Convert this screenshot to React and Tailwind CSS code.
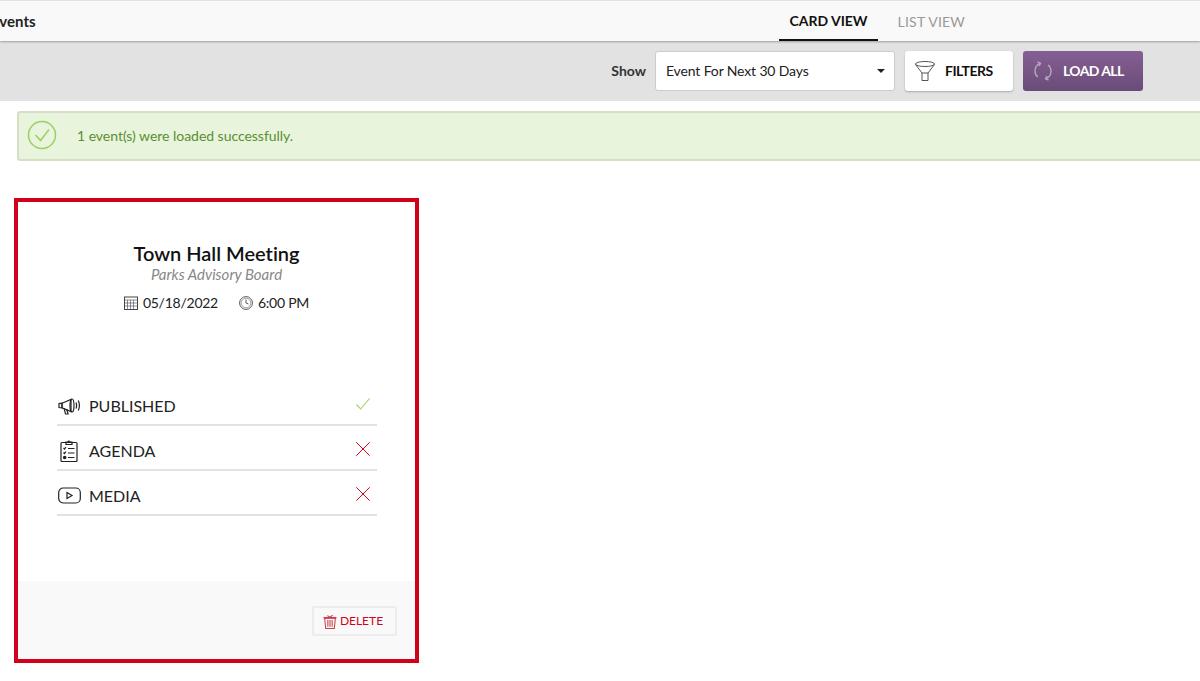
const font = "font-['Lato','Liberation_Sans',sans-serif]";

function Megaphone() {
  return (
    <svg width="23" height="18" viewBox="0 0 23 18" fill="none" stroke="#222" strokeWidth="1.2">
      <path d="M1 6.5v4l3 .3V6.2z" />
      <path d="M4 6.2 13 2.5v12L4 10.8z" />
      <path d="M6 11.2 7.5 17h2.6L8.6 12" />
      <ellipse cx="14" cy="8.5" rx="2" ry="6.5" />
      <path d="M18 5.5c.8 2 .8 4 0 6M20.3 3.5c1.4 3.2 1.4 6.800 0 10" />
    </svg>
  );
}

function Clipboard() {
  return (
    <svg width="18" height="23" viewBox="0 0 18 23" fill="none" stroke="#222" strokeWidth="1.2">
      <rect x="1" y="3.500" width="16" height="19" rx="1" />
      <path d="M6 5.500V3h2a1 1 0 0 1 2 0h2v2.500z" />
      <path d="m3.500 9 1 1 1.500-2M3.500 13.500l1 1 1.500-2M8 9.500h6.500M8 14h6.500M8 18.500h6.500" />
      <circle cx="4.700" cy="18.500" r="1.200" fill="#222" />
    </svg>
  );
}

function Play() {
  return (
    <svg width="23" height="17" viewBox="0 0 23 17" fill="none" stroke="#222" strokeWidth="1.2">
      <rect x="0.700" y="1" width="21.600" height="15" rx="4.500" />
      <path d="M9 5.500v6l5-3z" />
    </svg>
  );
}

function StatusRow({ icon, label, ok }) {
  return (
    <div className="flex items-center h-[45px] border-b-2 border-[#e2e2e2]">
      <div className="w-[32px] flex justify-center pr-[7px] pt-[6px]">{icon}</div>
      <span className="ml-[0.5px] text-[16px] text-[#222] pt-[6px]">{label}</span>
      <div className="ml-auto mr-[7px] mt-[3px] w-[14px] h-[14px] flex items-center justify-center">
        {ok ? (
          <svg width="14" height="12" viewBox="0 0 14 12" fill="none" stroke="#a5d46a" strokeWidth="1.100">
            <path d="M0.400 6.500 4.700 11 13.600 0.400" />
          </svg>
        ) : (
          <svg width="14" height="14" viewBox="0 0 14 14" fill="none" stroke="#d0021b" strokeWidth="1">
            <path d="M0.300 0.300 13.700 13.700M13.700 0.300 0.300 13.700" />
          </svg>
        )}
      </div>
    </div>
  );
}

export default function App() {
  return (
    <div className={`${font} w-[1200px] h-[681px] overflow-hidden bg-white text-[#111] [font-variant-ligatures:none]`}>
      <div className="flex items-center h-[41px] border-t border-[#e2e2e2] bg-[#f9f9f9] shadow-[0_1px_2px_rgba(0,0,0,0.3)] relative">
        <div className="ml-[-9px] text-[15px] font-bold text-[#222]">Events</div>
        <div className="ml-auto mr-[217px] flex gap-[2px] h-full">
          <div className="flex items-center px-[10px] text-[14px] font-bold border-b-2 border-[#111]">CARD VIEW</div>
          <div className="flex items-center px-[18px] text-[14px] tracking-[0.2px] text-[#999]">LIST VIEW</div>
        </div>
      </div>

      <div className="flex items-center justify-end h-[60px] bg-[#e2e2e2] pr-[57px]">
        <span className="text-[14px] font-bold text-[#333] mr-[9px] mb-[2px]">Show</span>
        <div className="flex items-center w-[240px] h-[40px] px-[10px] pb-[2px] bg-white border border-[#ccc] rounded-[3px] text-[14px] tracking-[-0.14px] text-[#222]">
          Event For Next 30 Days
          <span className="ml-auto mr-[-1px] mt-[2px] w-0 h-0 border-x-[4px] border-x-transparent border-t-[4px] border-t-[#222]"></span>
        </div>
        <button className="flex items-center ml-[10px] w-[108px] h-[40px] pl-[9px] bg-white rounded-[3px] shadow-[0_1px_2px_rgba(0,0,0,0.25)] text-[14px] font-bold tracking-[-0.5px]">
          <svg width="22" height="22" viewBox="0 0 22 22" fill="none" stroke="#555" strokeWidth="1">
            <ellipse cx="11" cy="4" rx="9.500" ry="2.500" />
            <path d="M1.500 4.500 8 13v7.500h6V13l6.500-8.500" />
            <path d="M8 13h6" />
          </svg>
          <span className="ml-[9px] mb-[2px]">FILTERS</span>
        </button>
        <button className="flex items-center ml-[10px] w-[120px] h-[40px] pl-[11px] rounded-[3px] bg-gradient-to-b from-[#865f93] to-[#6a4c78] text-white text-[14px] font-bold tracking-[-0.6px]">
          <svg width="18" height="20" viewBox="0 0 18 20" fill="none" stroke="#b5a9bb" strokeWidth="1.400">
            <path d="M6.500 2.300C2.500 3.500 1 7 1 10c0 2.500 1 4.500 2.800 6" />
            <path d="M11.500 17.700c4-1.200 5.500-4.700 5.500-7.700 0-2.500-1-4.500-2.800-6" />
            <path d="M3.500 1 6.500 2.300 5 5M14.500 19l-3-1.300L13 15" />
          </svg>
          <span className="ml-[11px] mb-[2px]">LOAD ALL</span>
        </button>
      </div>

      <div className="ml-[17px] mt-[10px] flex items-center h-[50px] bg-[#e9f4dc] border-2 border-r-0 border-[#d5dfc8] rounded-l-[3px] pl-[8px] pb-[2px]">
        <svg width="30" height="30" viewBox="0 0 30 30" fill="none" stroke="#9ccf63" strokeWidth="1.500">
          <circle cx="15" cy="15" r="13.500" />
          <path d="m8.500 15 5 5.500 8.500-11" />
        </svg>
        <span className="ml-[20px] text-[14px] tracking-[-0.03px] text-[#5a8f33]">1 event(s) were loaded successfully.</span>
      </div>

      <div className="ml-[14px] mt-[37px] w-[405px] h-[465px] border-4 border-[#d0021b] flex flex-col">
        <div className="flex-1 flex flex-col items-center pt-[37px]">
          <h2 className="text-[20px] font-semibold leading-[28px] text-[#111]">Town Hall Meeting</h2>
          <div className="mt-[-1px] text-[15px] italic text-[#888] leading-[16px]">Parks Advisory Board</div>
          <div className="flex items-center mt-[10px] text-[14px] tracking-[-0.25px] text-[#222]">
            <svg width="14" height="14" viewBox="0 0 14 14" fill="none" stroke="#444" strokeWidth="1">
              <rect x="0.500" y="1" width="13" height="12.500" />
              <path d="M0.500 4h13M3.500 4v9.500M6.500 4v9.500M9.500 4v9.500M0.500 7h13M0.500 10h13" strokeWidth="0.600" />
            </svg>
            <span className="ml-[5px]">05/18/2022</span>
            <svg className="ml-[21px]" width="14" height="14" viewBox="0 0 14 14" fill="none" stroke="#444" strokeWidth="0.900">
              <circle cx="7" cy="7" r="6.400" />
              <circle cx="7" cy="7" r="4.800" strokeWidth="0.500" />
              <path d="M7 3.500V7l2.500 1" />
            </svg>
            <span className="ml-[5px]">6:00 PM</span>
          </div>
          <div className="w-[320px] mt-[68px]">
            <StatusRow icon={<Megaphone />} label="PUBLISHED" ok />
            <StatusRow icon={<Clipboard />} label="AGENDA" />
            <StatusRow icon={<Play />} label="MEDIA" />
          </div>
        </div>
        <div className="h-[78px] bg-[#f9f9f9] flex justify-end items-start pt-[25px] pr-[18px]">
          <button className="flex items-center justify-center w-[85px] h-[30px] border-2 border-[#ececec] rounded-[2px] pr-[3px] text-[12px] text-[#d0021b]">
            <svg width="14" height="15" viewBox="0 0 13 14" fill="none" stroke="#c9424f" strokeWidth="1">
              <path d="M0.500 3.500h12" strokeWidth="1.500" />
              <path d="M4 1.500 6.500 3 9 1" />
              <path d="M1.500 4 2.500 13.500h8L11.500 4z" />
              <path d="M4.500 5.500v6.500M6.500 5.500v6.500M8.500 5.500v6.500" />
            </svg>
            <span className="ml-[3px]">DELETE</span>
          </button>
        </div>
      </div>
    </div>
  );
}
